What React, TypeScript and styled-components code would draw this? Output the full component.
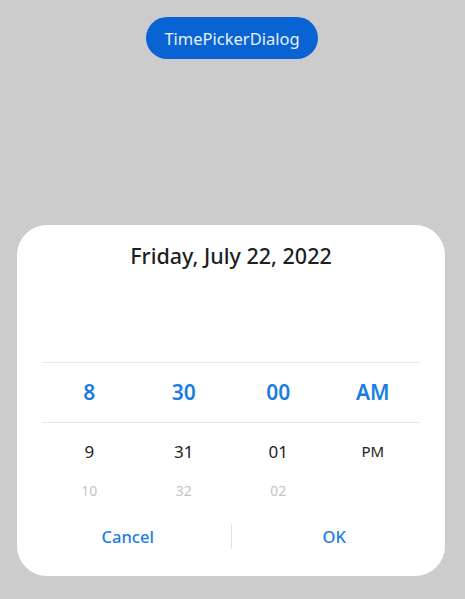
import styled, { createGlobalStyle } from "styled-components";

const GlobalStyle = createGlobalStyle`
  html, body {
    margin: 0;
    padding: 0;
    background: #cccccc;
    font-family: "Noto Sans", Roboto, sans-serif;
  }
  #root {
    min-height: 599px;
  }
`;

const BLUE = "#1a7ee0";

interface Column {
  selected: string;
  next: string;
  after?: string;
  small?: boolean;
}

const columns: Column[] = [
  { selected: "8", next: "9", after: "10" },
  { selected: "30", next: "31", after: "32" },
  { selected: "00", next: "01", after: "02" },
  { selected: "AM", next: "PM", small: true },
];

export default function App() {
  return (
    <Page>
      <GlobalStyle />
      <OpenButton>TimePickerDialog</OpenButton>
      <Dialog>
        <Title>Friday, July 22, 2022</Title>
        <Picker>
          <SelectedRow>
            {columns.map((c) => (
              <Cell key={c.selected} variant="selected">
                {c.selected}
              </Cell>
            ))}
          </SelectedRow>
          <Row height={56}>
            {columns.map((c) => (
              <Cell key={c.next} variant={c.small ? "small" : "next"}>
                {c.next}
              </Cell>
            ))}
          </Row>
          <Row height={24}>
            {columns.map((c, i) => (
              <Cell key={i} variant="faded">
                {c.after ?? ""}
              </Cell>
            ))}
          </Row>
        </Picker>
        <Actions>
          <ActionButton>Cancel</ActionButton>
          <Separator />
          <ActionButton>OK</ActionButton>
        </Actions>
      </Dialog>
    </Page>
  );
}

const Page = styled.div`
  display: flex;
  flex-direction: column;
  align-items: flex-start;
  padding-top: 17px;
`;

const OpenButton = styled.button`
  align-self: center;
  margin-left: -1px;
  height: 42px;
  width: 172px;
  border: 0;
  border-radius: 21px;
  background: #0a63d2;
  color: #e8f0fb;
  font-family: "Noto Sans", Roboto, sans-serif;
  font-size: 16.5px;
  padding: 0;
  cursor: pointer;
`;

const Dialog = styled.div`
  margin: 166px 0 0 17px;
  width: 428px;
  height: 351px;
  box-sizing: border-box;
  background: #ffffff;
  border-radius: 30px;
  padding: 18px 25px 0;
  display: flex;
  flex-direction: column;
`;

const Title = styled.div`
  text-align: center;
  font-size: 21.5px;
  font-weight: 500;
  line-height: 26px;
  color: #1d1f23;
`;

const Picker = styled.div`
  margin-top: 93px;
  display: flex;
  flex-direction: column;
`;

const Row = styled.div<{ height: number }>`
  display: grid;
  grid-template-columns: repeat(4, 1fr);
  align-items: center;
  height: ${({ height }) => height}px;
`;

const SelectedRow = styled.div`
  display: grid;
  grid-template-columns: repeat(4, 1fr);
  align-items: center;
  height: 59px;
  border-top: 1px solid #e8e8e8;
  border-bottom: 1px solid #e8e8e8;
`;

const cellStyles = {
  selected: `font-size: 21px; font-weight: 600; color: ${BLUE};`,
  next: "font-size: 17px; color: #222222;",
  small: "font-size: 15px; color: #222222;",
  faded: "font-size: 14px; color: #c4c4c4;",
};

const Cell = styled.div<{ variant: keyof typeof cellStyles }>`
  text-align: center;
  line-height: 1;
  ${({ variant }) => cellStyles[variant]}
`;

const Actions = styled.div`
  margin: 9px -17px 0;
  display: flex;
  align-items: center;
  height: 48px;
`;

const ActionButton = styled.button`
  flex: 1;
  background: none;
  border: 0;
  padding: 0;
  height: 100%;
  font-family: "Noto Sans", Roboto, sans-serif;
  font-size: 16.5px;
  font-weight: 500;
  color: ${BLUE};
  cursor: pointer;
`;

const Separator = styled.div`
  width: 1px;
  height: 25px;
  background: #e2e2e2;
`;
